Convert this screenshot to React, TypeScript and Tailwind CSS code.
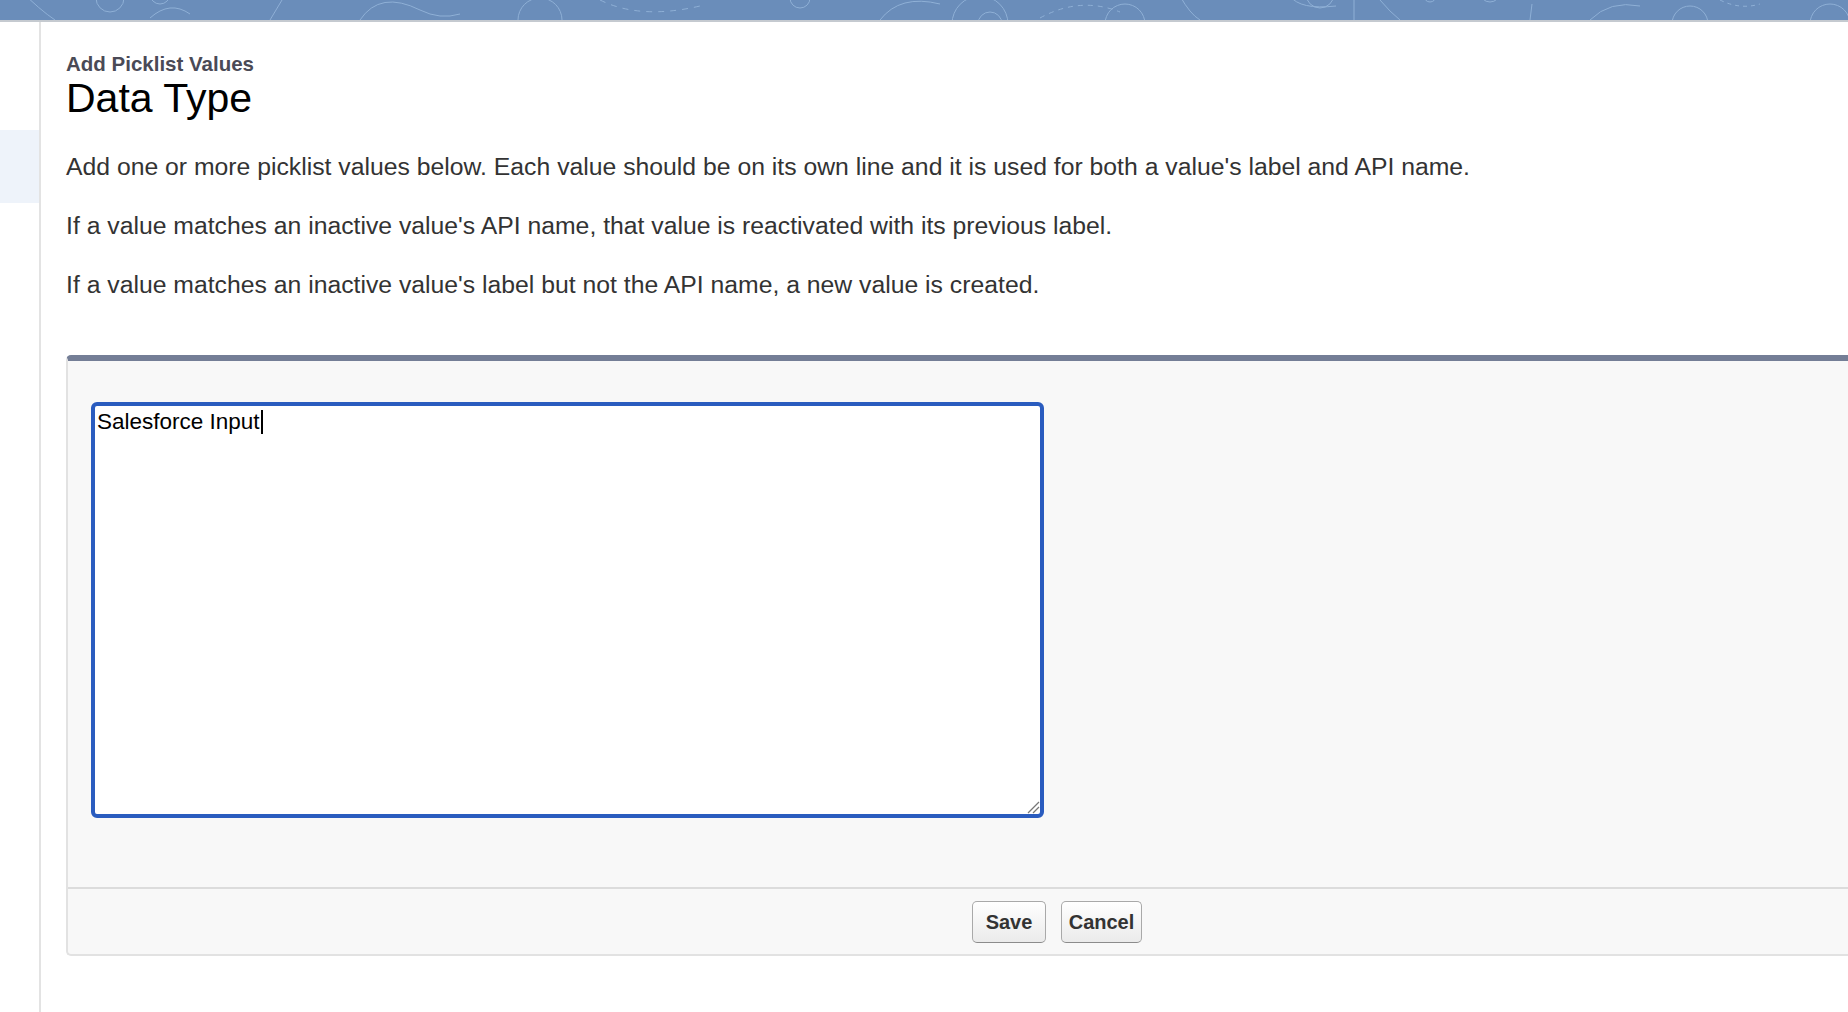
import React from 'react';

const arial = { fontFamily: '"Liberation Sans", Arial, sans-serif' };

const Banner: React.FC = () => (
  <div className="relative h-[22px] w-full overflow-hidden bg-[#6a8dba] border-b-2 border-[#c5cad0]">
    {/* faint swirl pattern */}
    <svg className="absolute inset-0" width="1848" height="20" fill="none" stroke="#8fb0d6" strokeWidth="1">
      <path d="M20 -10 Q40 10 55 20" />
      <circle cx="110" cy="-2" r="14" />
      <path d="M150 18 Q170 0 190 14" />
      <circle cx="160" cy="-6" r="10" />
      <path d="M270 20 L282 0" />
      <path d="M360 20 Q380 -10 420 10 Q440 20 460 14" />
      <circle cx="540" cy="20" r="22" />
      <path d="M600 0 Q640 20 700 6" strokeDasharray="6 6" />
      <circle cx="800" cy="-2" r="10" />
      <path d="M880 20 Q900 -6 940 4" />
      <circle cx="980" cy="24" r="28" />
      <circle cx="990" cy="24" r="12" />
      <path d="M1040 18 Q1080 -4 1120 12" strokeDasharray="5 5" />
      <circle cx="1125" cy="24" r="20" />
      <path d="M1180 -4 Q1190 14 1200 20" />
      <path d="M1290 -4 Q1300 10 1336 6" />
      <circle cx="1320" cy="-6" r="14" />
      <path d="M1354 20 L1354 0" />
      <path d="M1380 0 Q1390 12 1400 20" />
      <circle cx="1430" cy="-4" r="6" />
      <circle cx="1490" cy="-8" r="10" />
      <path d="M1530 20 L1532 4" />
      <path d="M1590 20 Q1610 0 1640 6" />
      <circle cx="1690" cy="24" r="18" />
      <path d="M1720 0 Q1740 10 1760 4" strokeDasharray="4 4" />
      <circle cx="1830" cy="24" r="20" />
    </svg>
  </div>
);

const Button: React.FC<{ label: string; w: string }> = ({ label, w }) => (
  <button
    className={`h-[42px] ${w} rounded-[5px] border border-[#a9a9a9] border-b-[#8c8c8c] bg-gradient-to-b from-white to-[#ebebeb] text-[20px] font-bold text-[#333]`}
    style={arial}
  >
    {label}
  </button>
);

export default function App() {
  return (
    <div className="min-h-[1012px] w-full bg-white" style={arial}>
      <Banner />
      <div className="flex">
        {/* sidebar */}
        <div className="w-[41px] shrink-0 border-r-2 border-[#e3e3e3] min-h-[990px]">
          <div className="mt-[108px] h-[73px] bg-[#eef3fa]" />
        </div>

        {/* main */}
        <div className="flex-1 pl-[25px] pt-[30px] overflow-hidden">
          <div className="text-[20.5px] leading-[24px] font-bold text-[#4a4a56]">Add Picklist Values</div>
          <h1 className="text-[41px] leading-[44px] text-black">Data Type</h1>

          <div className="mt-[32px] flex flex-col gap-[29px] text-[24.75px] leading-[30px] text-[#333]">
            <p>Add one or more picklist values below. Each value should be on its own line and it is used for both a value's label and API name.</p>
            <p>If a value matches an inactive value's API name, that value is reactivated with its previous label.</p>
            <p>If a value matches an inactive value's label but not the API name, a new value is created.</p>
          </div>

          {/* panel */}
          <div className="mt-[55px] rounded-l-[5px] border-l-2 border-b-2 border-[#e2e2e2] border-t-[6px] border-t-[#747e96] bg-[#f8f8f8]">
            <div className="pl-[23px] pt-[41px] pb-[69px]">
              <div className="relative h-[416px] w-[953px] rounded-[6px] border-4 border-[#2a5cbf] bg-white px-[2px] pt-[3px]">
                <div className="flex items-center text-[22.5px] leading-[26px] text-black">
                  <span>Salesforce Input</span>
                  <span className="ml-[1px] h-[24px] w-[2px] bg-black" />
                </div>
                <svg className="absolute right-0 bottom-0" width="14" height="14" stroke="#777" strokeWidth="1.3">
                  <line x1="2" y1="13" x2="13" y2="2" />
                  <line x1="7" y1="13" x2="13" y2="7" />
                </svg>
              </div>
            </div>
            <div className="flex h-[67px] items-start gap-[15px] border-t-2 border-[#dcdcdc] pl-[904px] pt-[12px]">
              <Button label="Save" w="w-[74px]" />
              <Button label="Cancel" w="w-[81px]" />
            </div>
          </div>
        </div>
      </div>
    </div>
  );
}
